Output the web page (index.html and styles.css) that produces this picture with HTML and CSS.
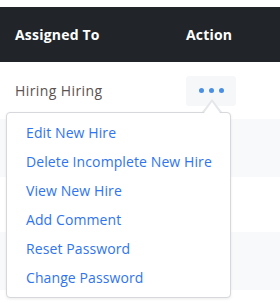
FILE: index.html
```html
<!DOCTYPE html>
<html>
<head>
<meta charset="utf-8">
<link rel="stylesheet" href="styles.css">
</head>
<body>
<div class="table">
  <div class="row head">
    <div class="cell">Assigned To</div>
    <div class="cell">Action</div>
  </div>
  <div class="row first">
    <div class="cell name">Hiring Hiring</div>
    <div class="cell">
      <div class="action">
        <button class="dots" type="button"><span></span><span></span><span></span></button>
        <div class="menu">
          <a class="item">Edit New Hire</a>
          <a class="item">Delete Incomplete New Hire</a>
          <a class="item">View New Hire</a>
          <a class="item">Add Comment</a>
          <a class="item">Reset Password</a>
          <a class="item">Change Password</a>
        </div>
      </div>
    </div>
  </div>
  <div class="row stripe"></div>
  <div class="row plain"></div>
  <div class="row stripe"></div>
  <div class="row last"></div>
</div>
</body>
</html>
```

FILE: styles.css
```css
html, body {
  margin: 0;
  padding: 0;
  background: #fff;
  overflow: hidden;
}
body {
  font-family: "Open Sans", "Liberation Sans", sans-serif;
  font-size: 14px;
  padding-top: 7px;
}
.table {
  width: 280px;
}
.row {
  display: grid;
  grid-template-columns: 171px 1fr;
  padding-left: 15px;
  align-items: center;
}
.head {
  background: #212529;
  color: #fff;
  font-weight: 700;
  height: 55px;
  letter-spacing: 0.2px;
}
.first { height: 57px; }
.stripe { height: 58px; background: #f8f9fa; }
.plain { height: 55px; }
.last { height: 15px; }
.name {
  color: #5b5350;
  letter-spacing: 0.4px;
}
.action {
  position: relative;
  width: 50px;
}
.dots {
  width: 50px;
  height: 30px;
  border: 0;
  border-radius: 3px;
  background: #f6f7f9;
  display: flex;
  align-items: center;
  justify-content: center;
  gap: 5px;
  padding: 0;
  margin: 0;
}
.dots span {
  width: 5px;
  height: 5px;
  border-radius: 50%;
  background: #4a8fe6;
}
.menu {
  position: absolute;
  left: -180px;
  top: 36px;
  width: 225px;
  height: 186px;
  box-sizing: border-box;
  background: #fff;
  border: 1px solid #d6d8db;
  border-radius: 4px;
  box-shadow: 0 1px 3px rgba(0,0,0,0.08);
  padding: 5px 0 0 19px;
  display: flex;
  flex-direction: column;
  z-index: 2;
}
.menu::before {
  content: "";
  position: absolute;
  left: 195px;
  top: -14px;
  width: 0;
  height: 0;
  border-left: 10px solid transparent;
  border-right: 10px solid transparent;
  border-bottom: 13px solid #e4e6e9;
}
.menu::after {
  content: "";
  position: absolute;
  left: 197px;
  top: -11px;
  width: 0;
  height: 0;
  border-left: 8px solid transparent;
  border-right: 8px solid transparent;
  border-bottom: 11px solid #fff;
}
.item {
  display: block;
  color: #2f74f0;
  line-height: 29px;
  height: 29px;
  letter-spacing: 0.1px;
}
```
